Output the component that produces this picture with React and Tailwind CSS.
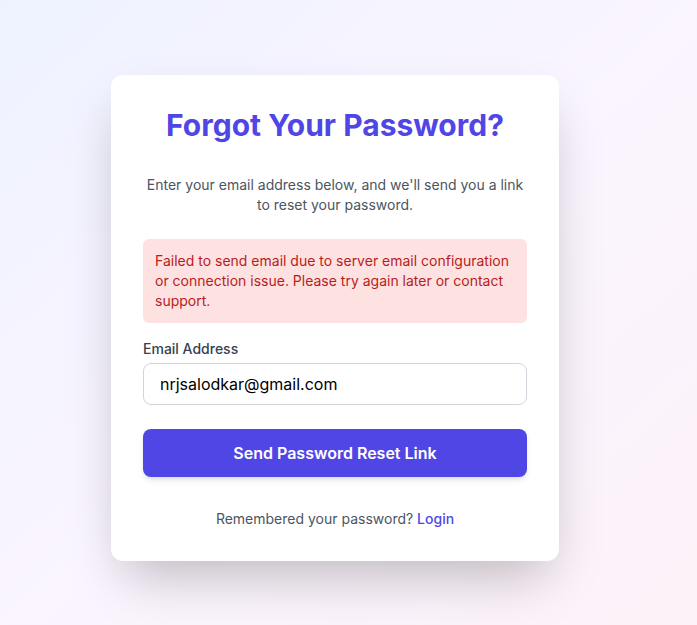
import { useState } from 'react';

const App = () => {
    const [email, setEmail] = useState("nrjsalodkar@gmail.com");

    return (
        <div
            className="min-h-screen w-full flex items-center justify-center pt-[10px] pr-[27px] bg-gradient-to-br from-[#eef2ff] via-[#faf5ff] to-[#fdf2f8]"
            style={{ fontFamily: 'Inter, "Noto Sans", sans-serif' }}
        >
            <div className="w-[448px] bg-white rounded-xl shadow-2xl p-8">
                <h2 className="text-3xl font-bold text-[#4f46e5] text-center mb-8">
                    Forgot Your Password?
                </h2>

                <p className="text-sm text-[#4b5563] text-center mb-6">
                    Enter your email address below, and we'll send you a link to reset your password.
                </p>

                {/* Error message */}
                <div className="bg-[#fee2e2] text-[#b91c1c] text-sm rounded-md p-3 mb-4">
                    Failed to send email due to server email configuration or connection issue. Please try again later or contact support.
                </div>

                <form onSubmit={(e) => e.preventDefault()}>
                    <label className="block text-sm font-medium text-[#374151] mb-1">
                        Email Address
                    </label>
                    <input
                        type="email"
                        value={email}
                        onChange={(e) => setEmail(e.target.value)}
                        className="w-full px-4 py-2 text-base text-black border border-[#d1d5db] rounded-lg outline-none"
                    />

                    <button
                        type="submit"
                        className="w-full mt-6 py-3 bg-[#4f46e5] text-white text-base font-semibold rounded-lg shadow-md"
                    >
                        Send Password Reset Link
                    </button>
                </form>

                <p className="mt-8 text-sm text-[#4b5563] text-center">
                    Remembered your password? <a href="#" className="text-[#4f46e5] font-medium">Login</a>
                </p>
            </div>
        </div>
    );
};

export default App;
